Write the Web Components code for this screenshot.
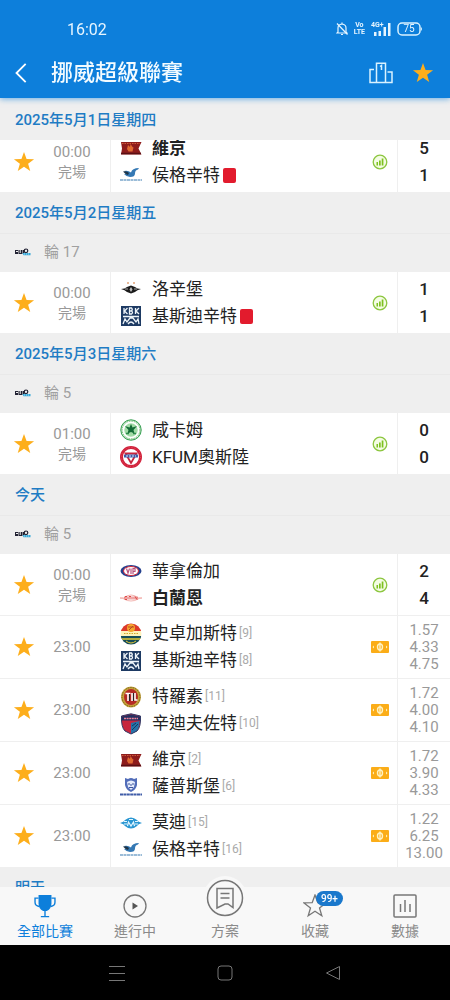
<!DOCTYPE html>
<html lang="zh-Hant">
<head>
<meta charset="utf-8">
<meta name="viewport" content="width=device-width, initial-scale=1">
<title>挪威超級聯賽</title>
<style>
html,body{margin:0;height:100%}
body{font-family:Roboto,"Noto Sans CJK TC",sans-serif;background:#efefef;color:#222;--blue:#0d7fdb;--gold:#fdae1b;--muted:#999}
</style>
</head>
<body>
<league-app></league-app>
<script>
const STAR = '<path d="M12 1l2.800 7.600 8.200.3-6.500 5 2.300 7.900L12 17.200l-6.800 4.600 2.300-7.900L1 8.900l8.200-.3z" ';
const ICONS = {
  star: ['0 0 24 24', STAR + 'fill="#fdae1b"/>'],
  back: ['0 0 24 24', '<path d="M16 2L6 12l10 10" fill="none" stroke="#fff" stroke-width="2"/>'],
  podium: ['0 0 24 22', '<g fill="none" stroke="#d9f2ff" stroke-width="1.5"><path d="M7.500 20.500V1.200h9v19.300M5 7.500H1v13h22V10h-4.500"/><path d="M11 4.500l1.500-1V8"/></g>'],
  mute: ['0 0 12 14', '<g fill="none" stroke="#e6f5ff" stroke-width="1.200"><path d="M2 10V6q0-3.500 4-4 4 .5 4 4v4l1 1H1zM5 12.500h2M6 .500V2"/><path d="M1 1.500l10.500 11"/></g>'],
  signal: ['0 0 20 14', '<g fill="#e6f5ff"><path d="M3 10h2.500v4H3zM7.500 9H10v5H7.500zM12.500 5H15v9h-2.500zM17 1h2.500v13H17z"/></g>'],
  battery: ['0 0 26 14', '<rect x="1" y="1" width="22" height="12" rx="4" fill="none" stroke="#d9f2ff" stroke-width="1.500"/><path d="M24 5q2 2 0 4z" fill="#d9f2ff"/>'],
  stats: ['0 0 16 16', '<circle cx="8" cy="8" r="6.800" fill="#f4fce4" stroke="#8cc63f" stroke-width="1.300"/><path d="M4.500 8h1.500v3.500H4.500zM7 6.500h1.700v5H7zM9.700 4.500h1.700v7H9.700z" fill="#7dc11f"/>'],
  odds: ['0 0 18 12', '<rect width="18" height="12" rx="1" fill="#fbad18"/><g fill="none" stroke="#fff3c4" stroke-width="1.400"><ellipse cx="9" cy="6" rx="2.500" ry="3"/><path d="M9 1.500v9"/></g><path d="M1.500 6l1.500-1.500v3zM16.500 6L15 4.500v3z" fill="#fff3c4"/>'],
  cup: ['0 0 24 26', '<path d="M5 1h14v9q0 6-5 8.500h-4Q5 16 5 10z" fill="#0d7fdb"/><path d="M5 4.500H1.200V9q0 4 4.500 4.500M19 4.500h3.800V9q0 4-4.500 4.500M12 18v6M7.500 24.500h9" fill="none" stroke="#0d7fdb" stroke-width="1.500"/>'],
  play: ['0 0 24 24', '<circle cx="12" cy="12" r="11" fill="none" stroke="#777" stroke-width="1.300"/><path d="M9.500 8.500v7l5.500-3.500z" fill="#555"/>'],
  plan: ['0 0 44 44', '<circle cx="22" cy="22" r="22" fill="#f8f8f8"/><circle cx="22" cy="22" r="17.500" fill="none" stroke="#777" stroke-width="1.500"/><path d="M14 12.500h16v19l-5-3.500H22l-8 4zM17.500 17.500h9M17.500 22h9" fill="none" stroke="#777" stroke-width="1.500"/>'],
  fav: ['0 0 24 24', STAR + 'fill="none" stroke="#777" stroke-width="1.300"/>'],
  data: ['0 0 24 24', '<g fill="none" stroke="#777" stroke-width="1.500"><rect x="1" y="1" width="22" height="22" rx="1"/><path d="M7.500 10v8M12 6v12M17 10v8"/></g>'],
  menu: ['0 0 16 16', '<path d="M0 1.500h16M0 8.500h16M0 15.500h16" stroke="#777" stroke-width="1"/>'],
  home: ['0 0 16 16', '<rect x="1" y="1" width="14" height="14" rx="3" fill="none" stroke="#777"/>'],
  prev: ['0 0 16 16', '<path d="M14.500 1.500v13L1.500 8z" fill="none" stroke="#777" stroke-linejoin="round"/>'],
  league: ['0 0 16 8', '<path d="M0 2h3v1H1v1h2v2H0zM3.500 2h1.200v3h1V2H7v4H3.500zM7.500 2h2v4h-2z" fill="#223"/><circle cx="11" cy="2.800" r="1.800" fill="none" stroke="#223" stroke-width="1.200"/><path d="M7.500 5h8v2.200h-7z" fill="#35a8d8"/><path d="M9 6h1M11 6h1M13 6h1" stroke="#fff" stroke-width=".6"/>']
};
const CRESTS = {
  viking: '<path d="M1 5h20.500l-3 6.500 3 6H1l1-6z" fill="#8e1c1c"/><path d="M2 6.500h18" stroke="#d05a3a" stroke-dasharray="1.500 1"/><path d="M8 8l2 2 .5-3 2 3 1 .5-1 4H8.500L7 12z" fill="#e06a32"/><path d="M1 16.500h20" stroke="#5a1014" stroke-width="1.500"/>',
  haugesund: '<path d="M4 7q4-1 7 1.500Q12 4 19 4l-1 1.500q-3 .5-3 4 0 3.500-5 3.500-4-.5-6-3l4-.5z" fill="#3478b4"/><path d="M3 7.500q4-1 6 1.500l-1 2q-3-1-5-3.500z" fill="#1d3448"/><path d="M0 16h22" stroke="#7ba7cb" stroke-width="1.500" stroke-dasharray="3 .5"/>',
  rosenborg: '<path d="M1 11q4 0 6-2l4-1.500L15 9q2 2 6 2-4 1-6 3l-4 1.500L7 14q-2-2-6-3z" fill="#1b1b1b"/><path d="M11 9l1.500 2.500L11 14l-1.500-2.500z" fill="#bbb"/><circle cx="8" cy="5" r="1" fill="#e2a378"/><circle cx="14" cy="5" r="1" fill="#e2a378"/><path d="M5 11h3M14 11h3" stroke="#aaa"/>',
  kbk: '<path d="M1 1h20v20H1z" fill="#1d3a63"/><g fill="none" stroke="#eef5fa" stroke-width="1.300"><path d="M4 3v6M7.500 3L4.500 6l3 3M9.500 3v6h2q2-1.500 0-3h-2 2q1.500-1.500 0-3zM15.500 3v6M19 3l-3 3 3 3M3 11.500h16M3 19l2-5 2 3 3-4h3l3 4 2-3 1 5M8 19q3-4 6 0"/></g>',
  ham: '<circle cx="11" cy="11" r="10.200" fill="#e9f7e8" stroke="#2e9b4b" stroke-width="1"/><circle cx="11" cy="11" r="7.500" fill="#a2dba6" stroke="#fff" stroke-width="1.500"/><circle cx="11" cy="11" r="9" fill="none" stroke="#63b56c" stroke-dasharray="1.500 1"/><path d="M11 5l1.500 3.500L17 7l-3.500 4 1 3.500L11 13l-3.500 1.500 1-3.500L5 7l4.500 1.500z" fill="#126b35"/><path d="M6 14.500h3M13 14.500h3" stroke="#2e8b4b" stroke-width="1.500"/>',
  kfum: '<circle cx="11" cy="11" r="9.500" fill="#fff" stroke="#d2213b" stroke-width="3"/><circle cx="11" cy="11" r="9.500" fill="none" stroke="#e05565" stroke-dasharray="1 2"/><path d="M5.500 7.500h11L11 17z" fill="#fff" stroke="#c7243c" stroke-width="1.800"/><path d="M4 8.500h14v3H4z" fill="#3c5da9"/><path d="M6 10h10" stroke="#dfe8ff" stroke-dasharray="2 1"/>',
  valerenga: '<ellipse cx="11" cy="11" rx="10.500" ry="6" fill="#24418e"/><ellipse cx="11" cy="11" rx="7.500" ry="4.500" fill="#fff" stroke="#d6283a"/><path d="M6.500 8.500L8 13l1.500-4.500M11 14V8.500M13 14V8.500h2v3h-2" fill="none" stroke="#b8527c" stroke-width="1.200"/>',
  brann: '<path d="M0 11h4q3-3 7-3t7 3h4q-3 0-4 1-3 2-7 2t-7-2q-1-1-4-1z" fill="#fff" stroke="#f0a39e" stroke-width=".8"/><path d="M5 9.500v3h2v-3zM9 12.500v-3h2v3M13 9.500v3M15 12.500v-3l2 3v-3" fill="none" stroke="#df4b48"/>',
  godset: '<clipPath id="c"><circle cx="11" cy="11" r="10.500"/></clipPath><g clip-path="url(#c)"><path d="M0 0h22v8H0z" fill="#dc392b"/><path d="M0 8h22v5H0z" fill="#fff2ba"/><path d="M0 13h22v9H0z" fill="#174c58"/><path d="M0 16h22" stroke="#e9cb36" stroke-width="1.500"/></g><circle cx="11" cy="5" r="4" fill="#f6a62d"/><path d="M8 4h6M9 7l4-4" stroke="#b54823"/><path d="M4 10.500h14" stroke="#d2a72b" stroke-dasharray="1.500 1"/><path d="M6 18q5 4 10 0" fill="none" stroke="#e9cb36"/>',
  til: '<ellipse cx="11" cy="11" rx="10" ry="10.500" fill="#c6a23a"/><ellipse cx="11" cy="11" rx="9" ry="9.500" fill="none" stroke="#756523" stroke-dasharray="1.500 1"/><ellipse cx="11" cy="11" rx="7" ry="8" fill="#b52b25"/><path d="M5.500 7.500h5M8 7v8M12 7v8M15 7v7h2.500" stroke="#fff" stroke-width="1.600" fill="none"/><path d="M9.500 8v7M13.500 7v8" stroke="#222"/>',
  sandefjord: '<path d="M1.500 3L11 .8 20.500 3q.5 11-3.500 15l-6 3-6-3Q1 14 1.500 3z" fill="#c8263e"/><path d="M11 10l8.500-2q0 7-3 10.500L11 21z" fill="#2773a8"/><path d="M2 3.500l9-2 9 2v4H2z" fill="#252f60"/><path d="M4 5.500h14" stroke="#ef8397" stroke-width="1.500" stroke-dasharray="2 .6"/><path d="M12 17l6-6M12 13l4-3" stroke="#15375e"/><path d="M1.500 3L11 .8 20.500 3q.5 11-3.500 15l-6 3-6-3Q1 14 1.500 3z" fill="none" stroke="#313a66"/>',
  sarpsborg: '<path d="M5 2l3 1q3-2 6 0l3-1v7q-1 5-6 7-5-2-6-7z" fill="#526db9"/><path d="M7 6q4-3 8 0l-1 5-3 3-3-3z" fill="#e5ecfc"/><path d="M8 8h2M12 8h2M9 11.500h4M11 8v2" stroke="#3a529a"/><path d="M0 18.500h22" stroke="#405da8" stroke-width="2" stroke-dasharray="3 .4"/>',
  molde: '<path d="M0 11q4-1 5-3 6-5 12 0 1 2 5 3-4 1-5 3-6 5-12 0-1-2-5-3z" fill="#2996d2"/><path d="M4 9.500h3M15 9.500h3M4 12h3M15 12h3M7.500 14l1-4 2.500 4 2.500-4 1 4M9 7.500h4" fill="none" stroke="#e2f6ff" stroke-width="1.200"/>'
};
const define = (tag, cls) => customElements.define(tag, cls);
class Base extends HTMLElement {
  connectedCallback() {
    if (this.shadowRoot) return;
    this.attachShadow({mode: 'open'}).innerHTML = `<style>:host,*{box-sizing:border-box}button{padding:0;border:0;background:none;font:inherit;color:inherit;display:grid;place-items:center}a{color:inherit;text-decoration:none}${this.css()}</style>${this.html()}`;
  }
}
define('ui-icon', class extends Base {
  css() { return ':host{display:block;width:20px;height:20px}svg{display:block;width:100%;height:100%}'; }
  html() { const [box, art] = ICONS[this.getAttribute('name')]; return `<svg viewBox="${box}" aria-hidden="true">${art}</svg>`; }
});
define('club-crest', class extends Base {
  css() { return ':host{display:block;width:22px;height:22px}svg{display:block}'; }
  html() { return `<svg width="22" height="22" viewBox="0 0 22 22" aria-hidden="true">${CRESTS[this.getAttribute('club')]}</svg>`; }
});
define('status-bar', class extends Base {
  css() { return `:host{display:flex;align-items:center;height:58px;padding:0 27px 0 67px;color:#e6f5ff;font-size:16px}
    time{flex:1}.icons{display:flex;align-items:center;gap:6px}
    .mute{width:12px;height:14px}.lte{font-size:7px;line-height:7px;font-weight:700;text-align:center}
    .sig{position:relative}.sig ui-icon{width:20px;height:14px}.sig span{position:absolute;left:0;top:-1px;font-size:7px;line-height:8px;font-weight:700}
    .bat{display:grid;place-items:center}.bat>*{grid-area:1/1}.bat ui-icon{width:26px;height:14px}.bat span{font-size:10px;line-height:14px;padding-right:2px}`; }
  html() { return `<time>16:02</time><div class="icons"><ui-icon class="mute" name="mute"></ui-icon><div class="lte">Vo<br>LTE</div><div class="sig"><ui-icon name="signal"></ui-icon><span>4G+</span></div><div class="bat"><ui-icon name="battery"></ui-icon><span>75</span></div></div>`; }
});
define('app-header', class extends Base {
  css() { return `:host{display:block;background:var(--blue);position:relative;z-index:3;box-shadow:0 1px 6px #0d7fdb99}
    .bar{display:flex;align-items:center;height:40px;padding:0 16px 10px 10px}
    .back{width:24px;height:30px}h1{flex:1;margin:0 0 0 17px;font-size:22px;line-height:30px;font-weight:500;color:#f2fbff}
    .back ui-icon{width:22px;height:22px}.podium{width:26px;height:30px;margin-right:18px}.podium ui-icon{width:24px;height:22px}.fav{width:22px;height:30px}.fav ui-icon{width:22px;height:22px}`; }
  html() { return `<status-bar></status-bar><div class="bar"><button class="back" aria-label="返回"><ui-icon name="back"></ui-icon></button><h1><slot></slot></h1><button class="podium" aria-label="積分榜"><ui-icon name="podium"></ui-icon></button><button class="fav" aria-label="收藏聯賽"><ui-icon name="star"></ui-icon></button></div>`; }
});
define('day-heading', class extends Base {
  css() { return ':host{display:block;background:#efefef;position:sticky;top:0;z-index:1}h2{margin:0;padding:2px 15px 0;font-size:15px;line-height:39px;font-weight:500;color:#1f7cc4}'; }
  html() { return '<h2><slot></slot></h2>'; }
});
define('round-heading', class extends Base {
  css() { return ':host{display:flex;align-items:center;gap:13px;height:39px;padding:0 15px 2px;border-top:1px solid #e9e9e9;color:#a0a0a0;font-size:15px;line-height:20px}ui-icon{width:16px;height:8px}'; }
  html() { return '<ui-icon name="league"></ui-icon><span><slot></slot></span>'; }
});
define('team-line', class extends Base {
  css() { return `:host{display:flex;align-items:center;height:27px;font-size:17px;line-height:27px;white-space:nowrap}
    club-crest{margin-right:10px}:host([winner]) .name{font-weight:700}
    small{font-size:12px;line-height:27px;color:#aaa;margin-left:2px}.red{width:13px;height:15px;border-radius:2px;background:#e21b2d;margin-left:3px}`; }
  html() { const r = this.getAttribute('rank');
    return `<club-crest club="${this.getAttribute('club')}"></club-crest><span class="name"><slot></slot></span>${r ? `<small>[${r}]</small>` : ''}${this.hasAttribute('red') ? '<span class="red" role="img" aria-label="紅牌"></span>' : ''}`; }
});
define('match-row', class extends Base {
  css() { return `:host{display:grid;grid-template-columns:48px 62px minmax(0,1fr) 34px 53px;min-height:61px;background:#fff}
    :host([upcoming]){min-height:63px;border-top:1px solid #efefef}
    .star{width:48px}.star ui-icon{width:22px;height:22px}
    .when{display:flex;flex-direction:column;justify-content:center;padding-right:14px;text-align:center;color:var(--muted);font-size:15px;line-height:20px}.when span{font-size:14px}
    .teams{display:flex;flex-direction:column;justify-content:center;border-left:1px solid #efefef;padding-left:9px}
    .info{width:34px}.info ui-icon{width:16px;height:16px}:host([upcoming]) .info ui-icon{width:18px;height:12px}
    .nums{display:flex;flex-direction:column;justify-content:center;border-left:1px solid #efefef;text-align:center;font-size:17px;line-height:27px;font-weight:500}
    :host([upcoming]) .nums{font-size:15px;line-height:17px;font-weight:400;color:var(--muted)}`; }
  html() { const up = this.hasAttribute('upcoming');
    return `<button class="star" aria-label="收藏比賽"><ui-icon name="star"></ui-icon></button><div class="when"><time>${this.getAttribute('time')}</time>${up ? '' : '<span>完場</span>'}</div><div class="teams"><slot></slot></div><button class="info" aria-label="${up ? '賠率' : '統計'}"><ui-icon name="${up ? 'odds' : 'stats'}"></ui-icon></button><div class="nums">${this.getAttribute('nums').split(' ').map(n => `<span>${n}</span>`).join('')}</div>`; }
});
define('match-list', class extends Base {
  css() { return ':host{display:block}.under{margin-top:-9px}'; }
  html() { return `
    <section><day-heading>2025年5月1日星期四</day-heading>
      <match-row class="under" time="00:00" nums="5 1"><team-line club="viking" winner>維京</team-line><team-line club="haugesund" red>侯格辛特</team-line></match-row></section>
    <section><day-heading>2025年5月2日星期五</day-heading><round-heading>輪 17</round-heading>
      <match-row time="00:00" nums="1 1"><team-line club="rosenborg">洛辛堡</team-line><team-line club="kbk" red>基斯迪辛特</team-line></match-row></section>
    <section><day-heading>2025年5月3日星期六</day-heading><round-heading>輪 5</round-heading>
      <match-row time="01:00" nums="0 0"><team-line club="ham">咸卡姆</team-line><team-line club="kfum">KFUM奧斯陸</team-line></match-row></section>
    <section><day-heading>今天</day-heading><round-heading>輪 5</round-heading>
      <match-row time="00:00" nums="2 4"><team-line club="valerenga">華拿倫加</team-line><team-line club="brann" winner>白蘭恩</team-line></match-row>
      <match-row upcoming time="23:00" nums="1.57 4.33 4.75"><team-line club="godset" rank="9">史卓加斯特</team-line><team-line club="kbk" rank="8">基斯迪辛特</team-line></match-row>
      <match-row upcoming time="23:00" nums="1.72 4.00 4.10"><team-line club="til" rank="11">特羅素</team-line><team-line club="sandefjord" rank="10">辛迪夫佐特</team-line></match-row>
      <match-row upcoming time="23:00" nums="1.72 3.90 4.33"><team-line club="viking" rank="2">維京</team-line><team-line club="sarpsborg" rank="6">薩普斯堡</team-line></match-row>
      <match-row upcoming time="23:00" nums="1.22 6.25 13.00"><team-line club="molde" rank="15">莫迪</team-line><team-line club="haugesund" rank="16">侯格辛特</team-line></match-row></section>
    <section><day-heading>明天</day-heading></section>`; }
});
define('tab-item', class extends Base {
  css() { return `:host{display:block;flex:1;color:#8a8a8a}:host([current]){color:var(--blue)}
    a{display:flex;flex-direction:column;align-items:center;justify-content:flex-end;height:58px;padding-bottom:4px;font-size:14px;line-height:20px}
    .pic{position:relative;margin-bottom:3px}ui-icon{width:24px;height:24px}
    :host([raised]) ui-icon{width:44px;height:44px}:host([raised]) .pic{margin-bottom:1px}
    .badge{position:absolute;left:13px;top:-3px;padding:0 5px;border-radius:8px;background:#1a78cc;color:#fff;font-size:10px;line-height:15px;font-weight:500}`; }
  html() { const b = this.getAttribute('badge');
    return `<a href="#${this.getAttribute('icon')}"><span class="pic"><ui-icon name="${this.getAttribute('icon')}"></ui-icon>${b ? `<span class="badge">${b}</span>` : ''}</span><span><slot></slot></span></a>`; }
});
define('tab-bar', class extends Base {
  css() { return ':host{display:block;background:#f8f8f8;position:relative;z-index:2}nav{display:flex}'; }
  html() { return `<nav><tab-item icon="cup" current>全部比賽</tab-item><tab-item icon="play">進行中</tab-item><tab-item icon="plan" raised>方案</tab-item><tab-item icon="fav" badge="99+">收藏</tab-item><tab-item icon="data">數據</tab-item></nav>`; }
});
define('system-bar', class extends Base {
  css() { return ':host{display:flex;justify-content:center;align-items:center;gap:calc(24% - 16px);height:55px;background:#000}button{width:16px;height:24px}ui-icon{width:16px;height:16px}'; }
  html() { return '<button aria-label="最近"><ui-icon name="menu"></ui-icon></button><button aria-label="主畫面"><ui-icon name="home"></ui-icon></button><button aria-label="返回"><ui-icon name="prev"></ui-icon></button>'; }
});
define('league-app', class extends Base {
  css() { return ':host{display:flex;flex-direction:column;height:100vh}main{flex:1;min-height:0;overflow:hidden;background:#efefef;padding-top:1px}'; }
  html() { return '<app-header>挪威超級聯賽</app-header><main><match-list></match-list></main><tab-bar></tab-bar><system-bar></system-bar>'; }
});
</script>
</body>
</html>
